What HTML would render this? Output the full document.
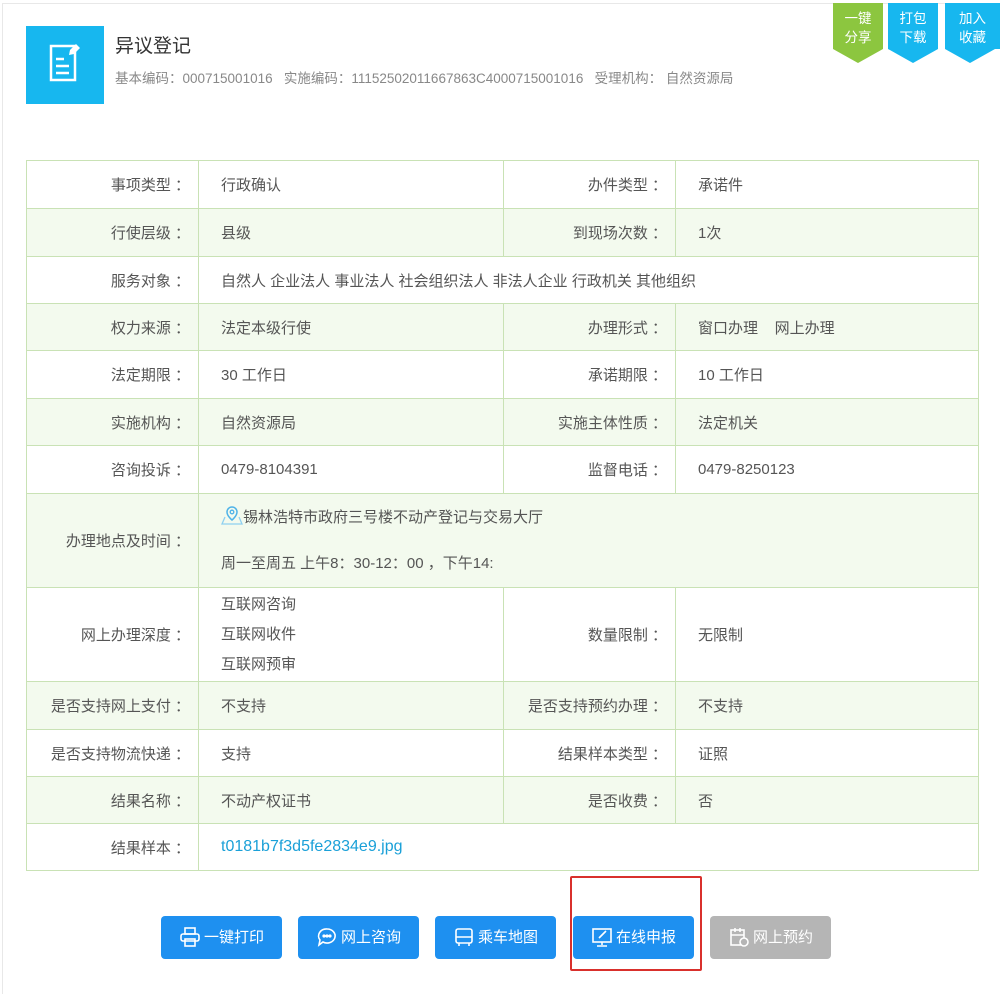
<!DOCTYPE html>
<html><head><meta charset="utf-8"><style>
body{margin:0;background:#fff;width:1000px;height:982px;overflow:hidden;position:relative;font-family:"Liberation Sans","Noto Sans CJK SC",sans-serif;color:#555}
.frame{position:absolute;left:2px;top:3px;width:1000px;height:990px;border-left:1px solid #e8e8e8;border-top:1px solid #e8e8e8}
.logo{position:absolute;left:26px;top:26px;width:78px;height:78px;background:#17b7ef}
.title{position:absolute;left:115px;top:31px;font-size:19px;color:#333}
.sub{position:absolute;left:115px;top:67px;font-size:13.5px;color:#888;white-space:nowrap}
.tag{position:absolute;top:3px;width:50px;height:46px;color:#fff;font-size:13.5px;text-align:center;line-height:19px;padding-top:6px;box-sizing:border-box}
table{position:absolute;left:26px;top:160px;border-collapse:collapse;width:953px;font-size:15px}
td{border:1px solid #c9e2b5;padding:0;height:46px;vertical-align:middle}
td.l{text-align:right;padding-right:8px;width:163px}
td.v{padding-left:22px}
tr.g td{background:#f3faee}
.btn{position:absolute;top:916px;width:121px;height:43px;border-radius:4px;background:#1e90f0;color:#fff;font-size:15px;line-height:43px;text-align:center}
.btn svg{vertical-align:middle;margin-right:3px;margin-top:-3px}
</style></head><body>
<div class="frame"></div>
<div class="logo"><svg width="78" height="78" viewBox="0 0 78 78"><rect x="25" y="20" width="24" height="34" fill="none" stroke="#fff" stroke-width="2.5"/><path d="M30 33h8M30 40h13M30 47h13" stroke="#fff" stroke-width="2.5"/><path d="M44 24l6-6 4 4-6 6-5 1z" fill="#fff"/></svg></div>
<div class="title">异议登记</div>
<div class="sub">基本编码：000715001016&nbsp;&nbsp;&nbsp;实施编码：11152502011667863C4000715001016&nbsp;&nbsp;&nbsp;受理机构： 自然资源局</div>
<div class="tag" style="left:833px;background:#8cc63f">一键<br>分享</div>
<div class="tag" style="left:888px;background:#17b7ef">打包<br>下载</div>
<div class="tag" style="left:945px;background:#17b7ef;width:55px">加入<br>收藏</div>
<svg style="position:absolute;left:833px;top:49px" width="170" height="15"><path d="M0 0h50l-25 14z" fill="#8cc63f"/><path d="M55 0h50l-25 14z" fill="#17b7ef"/><path d="M112 0h50l-25 14z" fill="#17b7ef"/></svg>
<table>
<tr style="height:48px"><td class="l">事项类型 ：</td><td class="v" style="width:282px">行政确认</td><td class="l" style="width:163px">办件类型 ：</td><td class="v">承诺件</td></tr>
<tr class="g" style="height:48px"><td class="l">行使层级 ：</td><td class="v">县级</td><td class="l">到现场次数 ：</td><td class="v">1次</td></tr>
<tr style="height:47px"><td class="l">服务对象 ：</td><td class="v" colspan="3">自然人 企业法人 事业法人 社会组织法人 非法人企业 行政机关 其他组织</td></tr>
<tr class="g" style="height:47px"><td class="l">权力来源 ：</td><td class="v">法定本级行使</td><td class="l">办理形式 ：</td><td class="v">窗口办理&nbsp;&nbsp;&nbsp;&nbsp;网上办理</td></tr>
<tr style="height:48px"><td class="l">法定期限 ：</td><td class="v">30 工作日</td><td class="l">承诺期限 ：</td><td class="v">10 工作日</td></tr>
<tr class="g" style="height:47px"><td class="l">实施机构 ：</td><td class="v">自然资源局</td><td class="l">实施主体性质 ：</td><td class="v">法定机关</td></tr>
<tr style="height:48px"><td class="l">咨询投诉 ：</td><td class="v">0479-8104391</td><td class="l">监督电话 ：</td><td class="v">0479-8250123</td></tr>
<tr class="g" style="height:94px"><td class="l">办理地点及时间 ：</td><td class="v" colspan="3" style="line-height:46px"><svg width="22" height="20" viewBox="0 0 22 20" style="vertical-align:-3px"><path d="M11 2a5 5 0 0 1 5 5c0 4-5 8-5 8s-5-4-5-8a5 5 0 0 1 5-5z" fill="none" stroke="#4fb3e8" stroke-width="1.5"/><circle cx="11" cy="7" r="1.8" fill="none" stroke="#4fb3e8" stroke-width="1.3"/><path d="M4 12l-3 7h20l-3-7" fill="none" stroke="#8fd0f0" stroke-width="1.3"/></svg>锡林浩特市政府三号楼不动产登记与交易大厅<br>周一至周五 上午8：30-12：00 ，下午14:</td></tr>
<tr style="height:94px"><td class="l">网上办理深度 ：</td><td class="v" style="line-height:30px">互联网咨询<br>互联网收件<br>互联网预审</td><td class="l">数量限制 ：</td><td class="v">无限制</td></tr>
<tr class="g" style="height:48px"><td class="l">是否支持网上支付 ：</td><td class="v">不支持</td><td class="l">是否支持预约办理 ：</td><td class="v">不支持</td></tr>
<tr style="height:47px"><td class="l">是否支持物流快递 ：</td><td class="v">支持</td><td class="l">结果样本类型 ：</td><td class="v">证照</td></tr>
<tr class="g" style="height:47px"><td class="l">结果名称 ：</td><td class="v">不动产权证书</td><td class="l">是否收费 ：</td><td class="v">否</td></tr>
<tr style="height:47px"><td class="l">结果样本 ：</td><td class="v" colspan="3" style="color:#1aa0d8;font-size:16px">t0181b7f3d5fe2834e9.jpg</td></tr>
</table>
<div class="btn" style="left:161px"><svg width="22" height="22" viewBox="0 0 22 22" fill="none" stroke="#fff" stroke-width="1.6"><rect x="6" y="2" width="10" height="6"/><rect x="2" y="8" width="18" height="7" rx="2"/><rect x="6" y="13" width="10" height="7"/></svg>一键打印</div>
<div class="btn" style="left:298px"><svg width="22" height="22" viewBox="0 0 22 22" fill="none" stroke="#fff" stroke-width="1.6"><path d="M11 3a8 7 0 1 1-4 13l-4 3 1-5A8 7 0 0 1 11 3z"/><circle cx="8" cy="10" r=".8" fill="#fff"/><circle cx="11" cy="10" r=".8" fill="#fff"/><circle cx="14" cy="10" r=".8" fill="#fff"/></svg>网上咨询</div>
<div class="btn" style="left:435px"><svg width="22" height="22" viewBox="0 0 22 22" fill="none" stroke="#fff" stroke-width="1.6"><rect x="3" y="3" width="16" height="14" rx="2"/><path d="M3 11h16M6 17v3M16 17v3"/></svg>乘车地图</div>
<div class="btn" style="left:573px"><svg width="22" height="22" viewBox="0 0 22 22" fill="none" stroke="#fff" stroke-width="1.6"><rect x="2" y="3" width="18" height="13"/><path d="M11 16v3M6 20h10M8 12l7-7"/></svg>在线申报</div>
<div class="btn" style="left:710px;background:#b5b5b5"><svg width="22" height="22" viewBox="0 0 22 22" fill="none" stroke="#fff" stroke-width="1.6"><rect x="3" y="4" width="13" height="15"/><path d="M7 2v4M12 2v4M3 9h13"/><circle cx="16" cy="16" r="4" fill="#b5b5b5"/></svg>网上预约</div>
<div style="position:absolute;left:570px;top:876px;width:128px;height:91px;border:2px solid #d9302c;border-radius:2px"></div>
</body></html>
